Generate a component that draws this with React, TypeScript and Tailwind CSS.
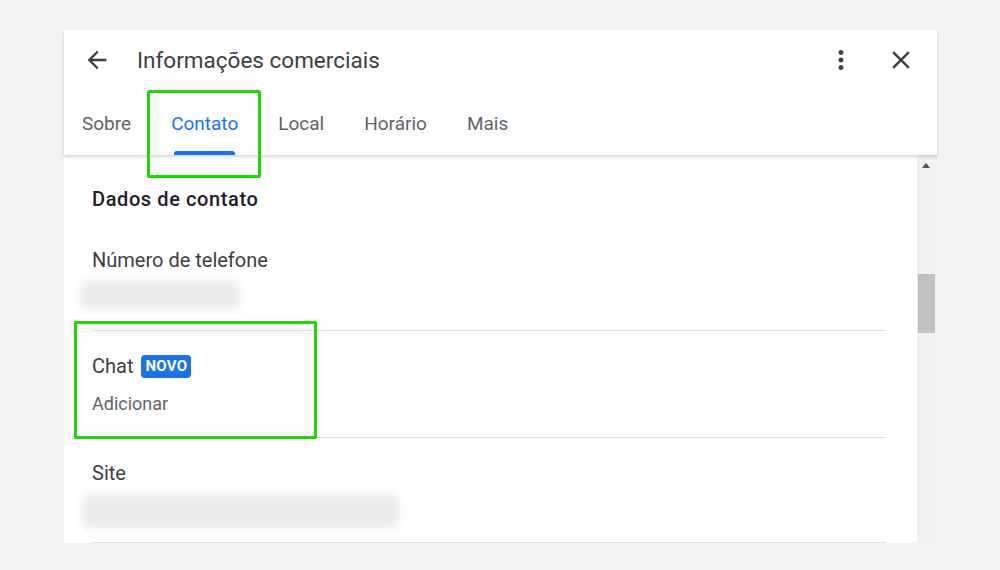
import React from 'react';

const ArrowBack = () => (
    <svg viewBox="0 0 24 24" className="w-[28px] h-[28px] fill-[#3c4043]">
        <path d="M20 11H7.83l5.59-5.59L12 4l-8 8 8 8 1.41-1.41L7.83 13H20v-2z" />
    </svg>
);

const MoreVert = () => (
    <svg viewBox="0 0 24 24" className="w-[30px] h-[30px] fill-[#3c4043]">
        <path d="M12 8c1.1 0 2-.9 2-2s-.9-2-2-2-2 .9-2 2 .9 2 2 2zm0 2c-1.1 0-2 .9-2 2s.9 2 2 2 2-.9 2-2-.9-2-2-2zm0 6c-1.1 0-2 .9-2 2s.9 2 2 2 2-.9 2-2-.9-2-2-2z" />
    </svg>
);

const Close = () => (
    <svg viewBox="0 0 24 24" className="w-[30px] h-[30px] fill-[#3c4043]">
        <path d="M19 6.41L17.59 5 12 10.59 6.41 5 5 6.41 10.59 12 5 17.59 6.41 19 12 13.41 17.59 19 19 17.59 13.41 12z" />
    </svg>
);

const tabs = ['Sobre', 'Contato', 'Local', 'Horário', 'Mais'];

const App: React.FC = () => {
    const active = 'Contato';

    return (
        <div
            className="w-[1000px] h-[570px] bg-[#f3f3f3] pt-[30px] pl-[64px]"
            style={{ fontFamily: 'Roboto, "Noto Sans", sans-serif' }}
        >
            <div className="relative w-[873px] h-[513px] bg-white flex flex-col">
                {/* header */}
                <div className="relative z-10 h-[125px] shrink-0 bg-white shadow-[0_2px_3px_rgba(0,0,0,0.16)]">
                    <div className="h-[60px] flex items-center pl-[19px] pr-[21px]">
                        <button className="w-[28px] h-[28px] flex items-center justify-center">
                            <ArrowBack />
                        </button>
                        <h1 className="ml-[26px] text-[22.5px] text-[#3c4043] leading-[28px] flex-1">
                            Informações comerciais
                        </h1>
                        <button className="w-[30px] h-[30px] flex items-center justify-center">
                            <MoreVert />
                        </button>
                        <button className="ml-[30px] w-[30px] h-[30px] flex items-center justify-center">
                            <Close />
                        </button>
                    </div>
                    <div className="h-[65px] flex pl-[18px] gap-[40px]">
                        {tabs.map((t) => (
                            <div key={t} className="relative h-full flex items-center pt-[4px]">
                                <span
                                    className={
                                        t === active
                                            ? 'text-[19px] text-[#1a73e8]'
                                            : 'text-[19px] text-[#5f6368]'
                                    }
                                >
                                    {t}
                                </span>
                                {t === active ? (
                                    <div className="absolute bottom-0 left-[3px] right-[3px] h-[4px] rounded-t-[3px] bg-[#1a73e8]" />
                                ) : null}
                            </div>
                        ))}
                    </div>
                </div>

                {/* body */}
                <div className="flex flex-1 min-h-0">
                    <div className="flex-1 overflow-hidden pl-[28px] pr-[31px]">
                        <h2 className="pt-[32px] text-[20px] font-medium leading-[24px] tracking-[0.6px] text-[#202124]">
                            Dados de contato
                        </h2>

                        <p className="mt-[37px] text-[20px] leading-[24px] text-[#3c4043]">Número de telefone</p>
                        <div className="mt-[9px] -ml-[12px] w-[160px] h-[28px] bg-[#ebebeb] rounded-[6px] blur-[4px]" />

                        <div className="mt-[21px] h-px bg-[#e0e0e0]" />

                        <div className="mt-[23px] flex items-center gap-[8px] h-[24px]">
                            <span className="text-[20px] leading-[24px] text-[#3c4043]">Chat</span>
                            <span className="h-[23px] px-[4px] flex items-center rounded-[4px] bg-[#1a73e8] text-white text-[15px] font-bold tracking-[0.3px]">
                                NOVO
                            </span>
                        </div>
                        <p className="mt-[15px] text-[18px] leading-[22px] text-[#5f6368]">Adicionar</p>

                        <div className="mt-[22px] h-px bg-[#e0e0e0]" />

                        <p className="mt-[23px] text-[20px] leading-[24px] text-[#3c4043]">Site</p>
                        <div className="mt-[9px] -ml-[10px] w-[317px] h-[34px] bg-[#ebebeb] rounded-[6px] blur-[4px]" />

                        <div className="mt-[14px] h-px bg-[#e0e0e0]" />
                    </div>

                    {/* scrollbar */}
                    <div className="relative w-[20px] bg-[#f1f1f1]">
                        <div className="absolute left-[5px] top-[8px] w-0 h-0 border-l-[4px] border-r-[4px] border-b-[5px] border-l-transparent border-r-transparent border-b-[#505050]" />
                        <div className="absolute left-[1px] top-[119px] w-[17px] h-[59px] bg-[#c1c1c1]" />
                    </div>
                </div>

                {/* highlight boxes */}
                <div className="absolute left-[83px] top-[60px] w-[114px] h-[88px] border-[3px] border-[#22d40a] rounded-[2px] z-20" />
                <div className="absolute left-[10px] top-[291px] w-[243px] h-[118px] border-[3px] border-[#22d40a] rounded-[2px] z-20" />
            </div>
        </div>
    );
};

export default App;
